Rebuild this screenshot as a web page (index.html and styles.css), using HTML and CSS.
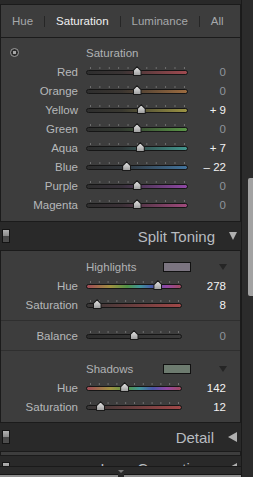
FILE: index.html
```html
<!DOCTYPE html>
<html lang="en">
<head>
    <meta charset="UTF-8">
    <title>Develop panels</title>
    <link rel="stylesheet" href="styles.css">
</head>
<body>
<div class="app">
    <div class="panels">
        <div class="topband"></div>

        <div class="box hsl">
            <nav class="tabs">
                <span class="tab">Hue</span><span class="tab active">Saturation</span><span class="tab">Luminance</span><span class="tab">All</span>
            </nav>
            <div class="group">
                <div class="head"><span class="target"></span><span class="title">Saturation</span></div>
                <div class="row"><span class="label">Red</span><div class="slider red" style="--v:.5"><i class="knob"></i></div><span class="value zero">0</span></div>
                <div class="row"><span class="label">Orange</span><div class="slider orange" style="--v:.5"><i class="knob"></i></div><span class="value zero">0</span></div>
                <div class="row"><span class="label">Yellow</span><div class="slider yellow" style="--v:.545"><i class="knob"></i></div><span class="value">+ 9</span></div>
                <div class="row"><span class="label">Green</span><div class="slider green" style="--v:.5"><i class="knob"></i></div><span class="value zero">0</span></div>
                <div class="row"><span class="label">Aqua</span><div class="slider aqua" style="--v:.535"><i class="knob"></i></div><span class="value">+ 7</span></div>
                <div class="row"><span class="label">Blue</span><div class="slider blue" style="--v:.39"><i class="knob"></i></div><span class="value">&ndash; 22</span></div>
                <div class="row"><span class="label">Purple</span><div class="slider purple" style="--v:.5"><i class="knob"></i></div><span class="value zero">0</span></div>
                <div class="row"><span class="label">Magenta</span><div class="slider magenta" style="--v:.5"><i class="knob"></i></div><span class="value zero">0</span></div>
            </div>
        </div>

        <div class="header"><span class="toggle"></span><span class="name">Split Toning</span><span class="arrow-down"></span></div>

        <div class="box split">
            <div class="group">
                <div class="head"><span class="title">Highlights</span><span class="swatch highlights"></span><span class="mini-arrow"></span></div>
                <div class="row"><span class="label">Hue</span><div class="slider hue" style="--v:.772"><i class="knob"></i></div><span class="value">278</span></div>
                <div class="row"><span class="label">Saturation</span><div class="slider sat" style="--v:.08"><i class="knob"></i></div><span class="value">8</span></div>
            </div>
            <div class="group balance">
                <div class="row"><span class="label">Balance</span><div class="slider gray" style="--v:.5"><i class="knob"></i></div><span class="value zero">0</span></div>
            </div>
            <div class="group shadows">
                <div class="head"><span class="title">Shadows</span><span class="swatch shadow"></span><span class="mini-arrow"></span></div>
                <div class="row"><span class="label">Hue</span><div class="slider hue" style="--v:.394"><i class="knob"></i></div><span class="value">142</span></div>
                <div class="row"><span class="label">Saturation</span><div class="slider sat" style="--v:.12"><i class="knob"></i></div><span class="value">12</span></div>
            </div>
        </div>

        <div class="header"><span class="toggle"></span><span class="name">Detail</span><span class="arrow-left"></span></div>
        <div class="box closed"></div>
        <div class="header cut"><span class="toggle"></span><span class="name">Lens Corrections</span><span class="arrow-left"></span></div>

        <div class="footer">
            <span class="footer-tri"></span>
            <div class="buttons"><span class="btn"></span><span class="btn"></span></div>
        </div>
    </div>
    <div class="scroll"><div class="thumb"></div></div>
</div>
</body>
</html>
```

FILE: styles.css
```css
body {
    margin: 0;
    background: #292929;
    font-family: "Liberation Sans", Arial, sans-serif;
    font-size: 11.5px;
    color: #b6b8ba;
}

.app {
    display: flex;
    width: 253px;
    height: 477px;
    overflow: hidden;
}

.panels {
    width: 241px;
    display: flex;
    flex-direction: column;
    background: #292929;
}

.topband {
    height: 4px;
    flex: none;
}

.box {
    flex: none;
    background: #3d3d3d;
    border: 1px solid #1b1b1b;
}

.box.closed {
    height: 3px;
}

/* tabs */
.tabs {
    display: flex;
    align-items: center;
    height: 32px;
    border-bottom: 1px solid #1b1b1b;
}

.tab {
    padding: 0 11px;
    line-height: 11px;
    color: #a6a8aa;
}

.tab + .tab {
    border-left: 1px solid #262626;
}

.tab.active {
    color: #f0f0f0;
}

/* rows */
.group {
    padding: 5px 0 7px;
}

.head {
    display: flex;
    align-items: center;
    height: 19px;
}

.head .title {
    color: #b0b2b4;
}

.hsl .head {
    padding-left: 9px;
}

.hsl .head .title {
    margin-left: 67px;
}

.target {
    width: 9px;
    height: 9px;
    box-sizing: border-box;
    border-radius: 50%;
    border: 1px solid #9a9a9a;
    background: radial-gradient(circle, #a8a8a8 0 1.4px, #2c2c2c 2px);
}

.row {
    display: grid;
    grid-template-columns: 77px 102px 1fr;
    column-gap: 8px;
    align-items: center;
    height: 19px;
    padding-right: 14px;
}

.label {
    text-align: right;
}

.value {
    text-align: right;
    color: #f2f2f2;
}

.value.zero {
    color: #8d949b;
}

/* split toning */
.split .row {
    grid-template-columns: 77px 96px 1fr;
}

.split .group {
    padding: 6px 0;
    border-bottom: 1px solid #2f2f2f;
}

.split .group.balance {
    padding: 5px 0;
}

.split .group.shadows {
    padding: 8px 0 6px;
    border-bottom: none;
}

.split .head {
    padding: 0 13px 0 85px;
}

.swatch {
    margin-left: auto;
    width: 26px;
    height: 8px;
    border: 1px solid #111;
}

.swatch.highlights {
    background: #7b7480;
}

.swatch.shadow {
    background: #6d7b6f;
}

.mini-arrow {
    margin-left: 28px;
    border-left: 4px solid transparent;
    border-right: 4px solid transparent;
    border-top: 6px solid #252525;
}

/* sliders */
.slider {
    position: relative;
    height: 11px;
}

.slider::before {
    content: "";
    position: absolute;
    left: 4px;
    top: 1px;
    width: calc(100% - 8px);
    height: 2px;
    background: linear-gradient(to right, #707070 1px, transparent 1px) 0 0 / 10% 100% repeat-x;
    border-right: 1px solid #707070;
}

.slider::after {
    content: "";
    position: absolute;
    left: 0;
    right: 0;
    top: 4px;
    height: 3px;
    border: 1px solid #161616;
    border-radius: 3px;
    background: var(--track);
}

.knob {
    position: absolute;
    z-index: 1;
    top: 0;
    left: calc(4px + var(--v) * (100% - 8px) - 4.5px);
    width: 9px;
    height: 10px;
    background: #1a1a1a;
    clip-path: polygon(50% 0, 100% 45%, 100% 100%, 0 100%, 0 45%);
}

.knob::before {
    content: "";
    position: absolute;
    left: 1px;
    top: 1.5px;
    width: 7px;
    height: 7.5px;
    background: linear-gradient(#e0e0e0, #a0a0a0);
    clip-path: polygon(50% 0, 100% 45%, 100% 100%, 0 100%, 0 45%);
}

.red { --track: linear-gradient(90deg, #2e2e2e, #3a3434 35%, #a04a50); }
.orange { --track: linear-gradient(90deg, #2e2e2e, #3a3530 35%, #9c6c40); }
.yellow { --track: linear-gradient(90deg, #2e2e2e, #393830 35%, #9c9444); }
.green { --track: linear-gradient(90deg, #2e2e2e, #323a30 35%, #5a9646); }
.aqua { --track: linear-gradient(90deg, #2e2e2e, #30393a 35%, #42968e); }
.blue { --track: linear-gradient(90deg, #2e2e2e, #30353a 35%, #42739c); }
.purple { --track: linear-gradient(90deg, #2e2e2e, #37303a 35%, #9048a6); }
.magenta { --track: linear-gradient(90deg, #2e2e2e, #3a3036 35%, #a04a7c); }
.hue { --track: linear-gradient(90deg, #a04a56, #a09242 25%, #529448 43%, #42969a 56%, #4a56a8 70%, #9448a4 85%, #a04a5e); }
.sat { --track: linear-gradient(90deg, #363636, #a04848); }
.gray { --track: linear-gradient(90deg, #2c2c2c, #3a3a3a); }

/* headers */
.header {
    flex: none;
    display: flex;
    align-items: center;
    height: 28px;
    padding-right: 4px;
    background: #292929;
}

.toggle {
    width: 6px;
    height: 12px;
    margin-left: 2px;
    border: 1px solid #141414;
    background: linear-gradient(#b2b2b2, #8a8a8a 50%, #474747 50%, #4e4e4e);
}

.header .name {
    margin-left: auto;
    margin-right: 14px;
    font-size: 15px;
    color: #b8bcc0;
}

.arrow-down {
    border-left: 4.5px solid transparent;
    border-right: 4.5px solid transparent;
    border-top: 8px solid #b0b0b0;
}

.arrow-left {
    border-top: 5.5px solid transparent;
    border-bottom: 5.5px solid transparent;
    border-right: 9px solid #b0b0b0;
}

.header.cut {
    height: 10px;
    overflow: hidden;
    align-items: flex-start;
}

.cut .toggle {
    margin-top: 6px;
}

.cut .name {
    margin-top: 5px;
    line-height: 15px;
}

.cut .arrow-left {
    margin-top: 7px;
}

/* footer */
.footer {
    flex: none;
    height: 10px;
    border-top: 1px solid #1a1a1a;
    background: #2a2a2a;
    display: flex;
    flex-direction: column;
}

.footer-tri {
    align-self: center;
    margin: 3px 0 0;
    border-left: 3px solid transparent;
    border-right: 3px solid transparent;
    border-top: 3px solid #7a7a7a;
}

.buttons {
    display: flex;
    gap: 6px;
    margin-top: 1px;
}

.btn {
    flex: 1;
    height: 3px;
    border-top: 1px solid #141414;
    background: #8e8e8e;
}

/* scrollbar */
.scroll {
    width: 12px;
    box-sizing: border-box;
    padding-top: 178px;
    border-left: 1px solid #1a1a1a;
    background: #2b2b2b;
}

.thumb {
    margin-left: 6px;
    width: 5px;
    height: 118px;
    background: #a2a2a2;
    border-radius: 2px 0 0 2px;
}
```
